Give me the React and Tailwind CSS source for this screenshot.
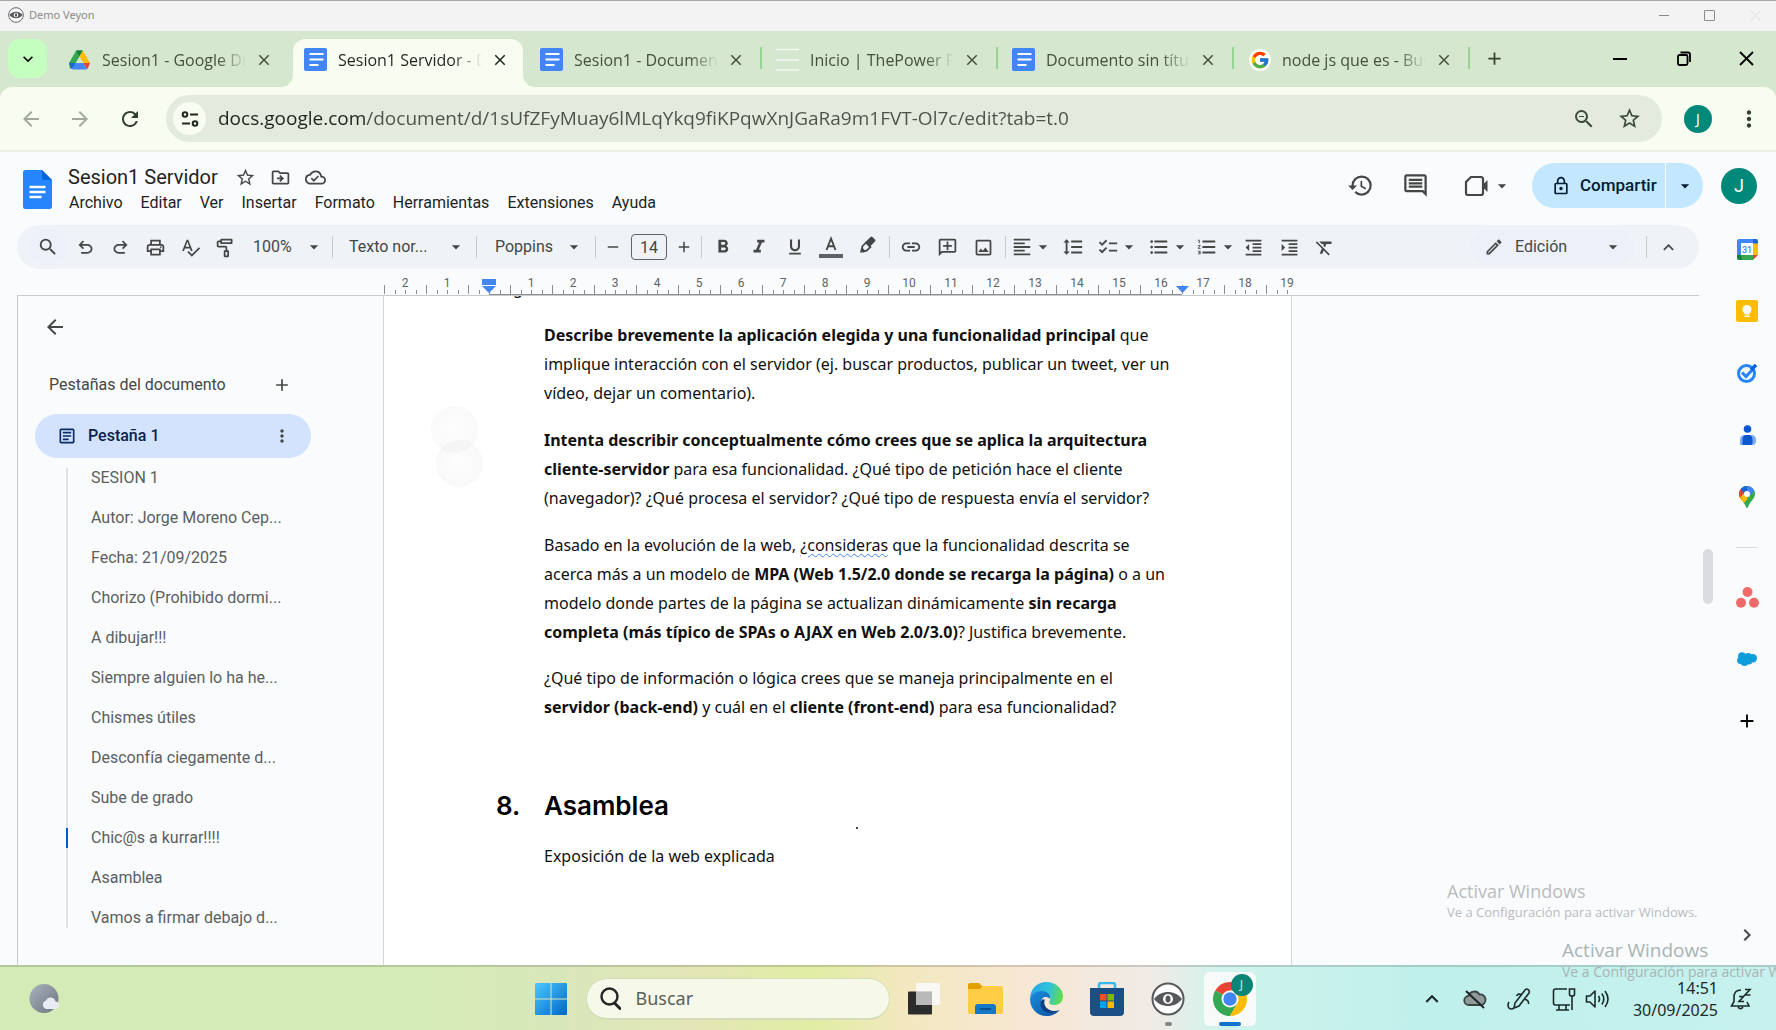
import React from "react";
import { FcGoogle } from "react-icons/fc";
import {
  MdSearch, MdOutlinePrint, MdSpellcheck, MdOutlineImagesearchRoller, MdFormatBold, MdFormatItalic,
  MdFormatUnderlined, MdLink, MdOutlineAddComment, MdOutlineImage, MdFormatAlignLeft, MdFormatLineSpacing,
  MdChecklist, MdFormatListBulleted, MdFormatListNumbered, MdFormatIndentDecrease, MdFormatIndentIncrease,
  MdFormatClear, MdOutlineEdit, MdKeyboardArrowUp, MdHistory, MdOutlineInsertComment, MdOutlineLock,
  MdStarBorder, MdOutlineDriveFileMove, MdOutlineCloudDone, MdArrowBack, MdArrowForward, MdRefresh,
  MdZoomOut, MdMoreVert, MdAdd, MdClose, MdRemove, MdKeyboardArrowDown, MdArrowDropDown, MdOutlineArticle,
  MdChevronRight,
} from "react-icons/md";

/* ---------- icons ---------- */

const DocsFavicon = () => (
  <svg width="23" height="23" viewBox="0 0 23 23" aria-hidden="true">
    <rect width="23" height="23" rx="2" fill="#4285f4" />
    <path d="M5.5 6h14M5.5 11.5h14M5.5 17h9" stroke="#fff" strokeWidth="2" />
  </svg>
);

const DriveFavicon = () => (
  <svg width="21" height="20" viewBox="0 0 21 20" aria-hidden="true">
    <path d="M7.2.6h6.6L10.5 6.4 4.4 16.9 1 19 0 13z" fill="#34a853" />
    <path d="M7.2.6h6.6l-3.3 5.8z" fill="#188038" />
    <path d="M13.8.6 21 13h-6.6L10.5 6.4z" fill="#fbbc04" />
    <path d="M21 13h-6.6l3.3 6.2c.6-.3 1-.7 1.300-1.200z" fill="#ea4335" />
    <path d="M0 13h6.700l-3.400 6.200c-.6-.3-1-.7-1.300-1.200z" fill="#1967d2" />
    <path d="M6.700 13h7.700l3.300 6.200c-.4.200-.8.300-1.200.300H4.500c-.4 0-.8-.100-1.200-.300z" fill="#4285f4" />
  </svg>
);

const LinesFavicon = () => (
  <svg width="23" height="23" viewBox="0 0 23 23" aria-hidden="true">
    <path d="M0 1.500h23M0 12h23M0 22h23" stroke="#f4f8f2" strokeWidth="1.500" />
  </svg>
);

const GoogleFavicon = () => (
  <span className="grid size-[22px] place-items-center rounded-full bg-white">
    <FcGoogle size={20} />
  </span>
);

const VeyonEye = ({ size }) => (
  <svg width={size} height={size} viewBox="0 0 34 34" aria-hidden="true">
    <circle cx="17" cy="17" r="15.500" fill="#fff" stroke="#56585c" strokeWidth="2" />
    <path d="M3 17c4-5 8.500-7 14-7s10 2 14 7c-4 5-8.500 7-14 7S7 22 3 17z" fill="#56585c" />
    <circle cx="17" cy="17" r="5" fill="#fff" />
    <ellipse cx="17" cy="17" rx="2.500" ry="3.500" fill="#56585c" />
  </svg>
);

const SiteInfo = () => (
  <svg width="20" height="20" viewBox="0 0 20 20" fill="none" stroke="#1f271f" strokeWidth="2" aria-hidden="true">
    <circle cx="5" cy="5.500" r="2.300" />
    <path d="M10 5.500h8M2 14.500h8" />
    <circle cx="15" cy="14.500" r="2.300" />
  </svg>
);

const DocsLogo = () => (
  <svg width="29" height="39" viewBox="0 0 29 39" aria-hidden="true">
    <path d="M2.500 0H19l10 10v26.500a2.500 2.500 0 0 1-2.500 2.500h-24A2.500 2.500 0 0 1 0 36.500v-34A2.500 2.500 0 0 1 2.500 0z" fill="#2684fc" />
    <path d="M19 0l10 10H21a2 2 0 0 1-2-2z" fill="#0066da" />
    <path d="M6.500 17h16M6.500 22h16M6.500 27h12" stroke="#fff" strokeWidth="2.400" />
  </svg>
);

const Undo = () => (
  <svg width="21" height="21" viewBox="0 -960 960 960" fill="currentColor" aria-hidden="true">
    <path d="M280-200v-80h284q63 0 109.500-40T720-420q0-60-46.500-100T564-560H312l104 104-56 56-200-200 200-200 56 56-104 104h252q97 0 166.500 63T800-420q0 94-69.500 157T564-200H280Z" />
  </svg>
);

const Redo = () => (
  <svg width="21" height="21" viewBox="0 -960 960 960" fill="currentColor" aria-hidden="true">
    <path d="M396-200q-97 0-166.500-63T160-420q0-94 69.500-157T396-640h252L544-744l56-56 200 200-200 200-56-56 104-104H396q-63 0-109.500 40T240-420q0 60 46.500 100T396-280h284v80H396Z" />
  </svg>
);

const TextColor = () => (
  <svg width="24" height="24" viewBox="0 0 24 24" fill="none" stroke="#444746" aria-hidden="true">
    <path d="M7.500 15 12 3.500 16.500 15M9 11.300h6" strokeWidth="1.900" />
    <path d="M0 21h24" stroke="#5f6368" strokeWidth="4" />
  </svg>
);

const Highlighter = () => (
  <svg width="20" height="20" viewBox="0 0 20 20" aria-hidden="true">
    <path d="M3 17.500h4l1.500-1.500-3.500-3.500-1 1z" fill="#444746" />
    <path d="M9 7.500 5.200 11.500v2.500l1.800 1.800h2.400l4-3.800z" fill="none" stroke="#444746" strokeWidth="1.800" />
    <path d="M8.500 7 13.500 2q1-.900 2 0l2.500 2.500q.9 1 0 2L13 11.500z" fill="#444746" />
  </svg>
);

const Meet = () => (
  <svg width="24" height="24" viewBox="0 0 24 24" fill="none" stroke="#444746" strokeWidth="2.200" aria-hidden="true">
    <path d="M7 3h10q2 0 2 2v14q0 2-2 2H4q-2 0-2-2V8z" />
    <path d="M19 10.500 23.500 6v12L19 13.500z" fill="#444746" stroke="none" />
  </svg>
);

const CalendarLogo = () => (
  <svg width="21" height="21" viewBox="0 0 21 21" aria-hidden="true">
    <path d="M2 0h14v4H4v12H0V2q0-2 2-2z" fill="#4285f4" />
    <path d="M16 0h3q2 0 2 2v3h-5z" fill="#1967d2" />
    <path d="M16 4.500h5V16h-5z" fill="#fbbc04" />
    <path d="M4 16h12v5H4z" fill="#34a853" />
    <path d="M0 16h4.500v5H2q-2 0-2-2z" fill="#188038" />
    <path d="M16 16h5l-5 5z" fill="#ea4335" />
    <path d="M4 4h12v12H4z" fill="#fff" />
    <text x="10" y="13.500" fontSize="9" fontFamily="Roboto, sans-serif" fontWeight="500" textAnchor="middle" fill="#4285f4">31</text>
  </svg>
);

const KeepLogo = () => (
  <svg width="22" height="22" viewBox="0 0 22 22" aria-hidden="true">
    <rect width="22" height="22" rx="2" fill="#fbbc04" />
    <circle cx="11" cy="9.500" r="4.500" fill="#fff" />
    <path d="M8.500 12h5v2.500h-5zM8.500 15.500h5V17h-5z" fill="#fff" />
  </svg>
);

const TasksLogo = () => (
  <svg width="22" height="20" viewBox="0 0 22 20" fill="none" aria-hidden="true">
    <circle cx="10.500" cy="10.500" r="8" stroke="#2684fc" strokeWidth="3" />
    <path d="M6 9.500l4 4 7.500-8" stroke="#2684fc" strokeWidth="3" />
    <path d="M15 7l5-5" stroke="#0066da" strokeWidth="3.500" />
  </svg>
);

const ContactsLogo = () => (
  <svg width="17" height="20" viewBox="0 0 17 20" aria-hidden="true">
    <circle cx="8.500" cy="4" r="3.800" fill="#0b57d0" />
    <path d="M1 20v-5q0-5 5-5h6q5 0 5 5v1q0 3-3 4z" fill="#7baaf7" />
    <path d="M3.500 20v-5q0-5 4-5h2q4 0 4 5v3q0 2-2 2z" fill="#0b57d0" />
  </svg>
);

const MapsLogo = () => (
  <svg width="16" height="22" viewBox="0 0 16 22" aria-hidden="true">
    <defs>
      <clipPath id="pin"><path d="M8 0a8 8 0 0 1 8 8c0 5-5 7-7 13.200q-1 1.500-2 0C5 15 0 13 0 8a8 8 0 0 1 8-8z" /></clipPath>
    </defs>
    <g clipPath="url(#pin)">
      <rect width="16" height="22" fill="#34a853" />
      <path d="M-1 14 8 4l3 6-7 8z" fill="#fbbc04" />
      <path d="M-2 14V2l4-1 7 7-7 7z" fill="#ea4335" />
      <path d="M0 13 6 6l4 5-6 6z" fill="#fbbc04" />
      <path d="M1 2 8-1l9 4-9 10 0-5z" fill="#4285f4" />
      <path d="M1 3 5 0h3l0 6-3 1z" fill="#1967d2" />
    </g>
    <circle cx="8" cy="8" r="3" fill="#fff" />
  </svg>
);

const AsanaLogo = () => (
  <svg width="23" height="21" viewBox="0 0 23 21" fill="#f06a6a" aria-hidden="true">
    <circle cx="11.500" cy="5" r="5" />
    <circle cx="5" cy="15.800" r="5" />
    <circle cx="18" cy="15.800" r="5" />
  </svg>
);

const SalesforceLogo = () => (
  <svg width="20" height="14" viewBox="0 0 20 14" fill="#0d9dda" aria-hidden="true">
    <circle cx="5" cy="4.200" r="3.900" /><circle cx="11" cy="4.500" r="3.600" /><circle cx="15.800" cy="6.300" r="4.200" />
    <circle cx="3.500" cy="8.500" r="3.400" /><circle cx="7.500" cy="10" r="3.900" /><circle cx="12" cy="9.200" r="3.200" />
  </svg>
);

const WeatherIcon = () => (
  <svg width="31" height="31" viewBox="0 0 31 31" aria-hidden="true">
    <defs>
      <linearGradient id="moon" x1="0" y1="0" x2="1" y2="1"><stop offset="0" stopColor="#aab2bd" /><stop offset="1" stopColor="#6d7480" /></linearGradient>
    </defs>
    <circle cx="15" cy="15.500" r="14.500" fill="url(#moon)" />
    <path d="M17 26a4.500 4.500 0 0 1 0-8.500 5 5 0 0 1 9.500 1A3.800 3.800 0 0 1 27 26z" fill="#e8ecf2" />
  </svg>
);

const WindowsLogo = () => (
  <svg width="32" height="32" viewBox="0 0 32 32" aria-hidden="true">
    <defs>
      <linearGradient id="win" x1="0" y1="0" x2="1" y2="1" gradientUnits="objectBoundingBox"><stop offset="0" stopColor="#4cc8ff" /><stop offset="1" stopColor="#0067c8" /></linearGradient>
    </defs>
    <path d="M0 1q0-1 1-1h14.500v15.500H0zM16.500 0H31q1 0 1 1v14.500H16.500zM0 16.500h15.500V32H1q-1 0-1-1zM16.500 16.500H32V31q0 1-1 1H16.500z" fill="url(#win)" />
  </svg>
);

const TaskViewIcon = () => (
  <svg width="32" height="32" viewBox="0 0 32 32" aria-hidden="true">
    <rect x="0" y="8.500" width="24" height="23" rx="1" fill="#2c2c2c" />
    <rect x="8" y="0" width="24" height="22" rx="1" fill="#fafafa" opacity=".9" />
    <path d="M8 8.500h16V22H8z" fill="#b9b9b9" />
  </svg>
);

const ExplorerIcon = () => (
  <svg width="35" height="32" viewBox="0 0 35 32" aria-hidden="true">
    <path d="M0 2q0-2 2-2h9l4 4-3 4H0z" fill="#e0a100" />
    <path d="M0 6h12l3-3h18q2 0 2 2v25q0 1-1 1H1q-1 0-1-1z" fill="#ffcc45" />
    <path d="M7 31v-7q0-3 3-3h15q3 0 3 3v7z" fill="#1478c8" />
    <path d="M12 26h11" stroke="#0b4f8c" strokeWidth="2" />
  </svg>
);

const EdgeIcon = () => (
  <svg width="34" height="34" viewBox="0 0 34 34" aria-hidden="true">
    <defs>
      <linearGradient id="edgeTop" x1="0" y1=".3" x2="1" y2=".5"><stop offset="0" stopColor="#2aa5e8" /><stop offset=".55" stopColor="#2fc3d8" /><stop offset="1" stopColor="#62dc4c" /></linearGradient>
      <linearGradient id="edgeBody" x1="0" y1="0" x2="1" y2="1"><stop offset="0" stopColor="#1b8fe0" /><stop offset="1" stopColor="#0c4f9e" /></linearGradient>
    </defs>
    <path d="M1 17C1 7 8 0 17.500 0 27 0 34 7 34 14.500c0 5-3.500 8.500-8.500 8.500-4 0-6-1.500-5-3.500 2.500-4.500-1-9.500-7-9.500C7 10 2.500 13 1 17z" fill="url(#edgeTop)" />
    <path d="M1 17c1.500-5 6-8 11.500-8 5.500 0 9.500 3.500 8.500 8-1-1.500-3-2-4.500-2-5 0-7 9 0 13.500 4.500 3 10.500 2 14-.5C27.500 32 22.500 34 17.500 34 8 34 1 26.500 1 17z" fill="url(#edgeBody)" />
    <path d="M13 17.500c-4 5 0 13.500 9 13.500 3.500 0 6-1 8.500-3-3.500 1.500-8 1.500-11.500-1-3.500-2.500-4.500-6-3-9.500z" fill="#0a3f86" />
  </svg>
);

const StoreIcon = () => (
  <svg width="34" height="34" viewBox="0 0 34 34" aria-hidden="true">
    <path d="M9 6V3q0-2 2-2h12q2 0 2 2v3" fill="none" stroke="#36b8ee" strokeWidth="2.500" />
    <path d="M0 6h34v24q0 4-4 4H4q-4 0-4-4z" fill="#1b4f86" />
    <path d="M10 12h6.500v6.500H10z" fill="#f25022" /><path d="M17.500 12H24v6.500h-6.500z" fill="#7fba00" />
    <path d="M10 19.500h6.500V26H10z" fill="#00a4ef" /><path d="M17.500 19.500H24V26h-6.500z" fill="#ffb900" />
  </svg>
);

const ChromeIcon = () => (
  <svg width="34" height="34" viewBox="0 0 34 34" aria-hidden="true">
    <path d="M17 17 2.300 8.500A17 17 0 0 1 31.700 8.500z" fill="#ea4335" />
    <path d="M2.300 8.500A17 17 0 0 0 17 34l7.400-12.700L17 17z" fill="#34a853" />
    <path d="M31.700 8.500H17V17l7.400 4.300L17 34A17 17 0 0 0 31.700 8.500z" fill="#fbbc04" />
    <path d="M17 8.500h14.700L24 17z" fill="#fbbc04" />
    <circle cx="17" cy="17" r="8.500" fill="#fff" />
    <circle cx="17" cy="17" r="6.700" fill="#4285f4" />
  </svg>
);

const CloudOff = () => (
  <svg width="24" height="24" viewBox="0 0 24 24" aria-hidden="true">
    <path d="M6 18a4.500 4.500 0 0 1-.5-9A6 6 0 0 1 16.500 7.500 5.300 5.300 0 0 1 18 18z" fill="#8f9a99" stroke="#3a4444" strokeWidth="1.800" />
    <path d="M3 4l18 17" stroke="#1f2727" strokeWidth="2" />
  </svg>
);

const PenIcon = () => (
  <svg width="24" height="24" viewBox="0 0 24 24" fill="none" stroke="#1c2a2a" strokeWidth="1.600" aria-hidden="true">
    <path d="M7 21l1-5L18 3q1.500-1.700 3.200-.400T22 6L12 19l-5 2z" />
    <path d="M15 8q-4-2-5.500 1M18 12.500q4 .500 3.500 4.500M2 15q-2 3 0 6 2 2 5 0" />
  </svg>
);

const NetworkIcon = () => (
  <svg width="24" height="24" viewBox="0 0 24 24" fill="none" stroke="#1c2a2a" strokeWidth="1.600" aria-hidden="true">
    <path d="M15 2H3.500Q1.500 2 1.500 4v12q0 2 2 2H18M7 18v5M14 18v5M4 23h13" />
    <path d="M17.500 2h5v5.500q0 1.500-2.500 1.500t-2.500-1.500zM20 9v14" />
  </svg>
);

const SoundIcon = () => (
  <svg width="24" height="24" viewBox="0 0 24 24" fill="none" stroke="#1c2a2a" strokeWidth="1.600" aria-hidden="true">
    <path d="M1.500 9h3.500l5-5v16l-5-5H1.500z" strokeLinejoin="round" />
    <path d="M13.500 9q2 3 0 6M16.800 6.500q4 5.500 0 11M20 4q6 8 0 16" />
  </svg>
);

const BellIcon = () => (
  <svg width="22" height="24" viewBox="0 0 22 24" fill="none" stroke="#1c2a2a" strokeWidth="1.600" aria-hidden="true">
    <path d="M11 3Q4 3 4 10v4.500L1.500 19H19l-2-4M8 20q2.500 3.500 5 0" />
    <path d="M9 9.500h4.500L9 14.500h5M15 2.500h5L15 8h5.500" />
  </svg>
);

/* ---------- window chrome ---------- */

const TABS = [
  { title: "Sesion1 - Google Drive", icon: DriveFavicon },
  { title: "Sesion1 Servidor - D", icon: DocsFavicon, active: true },
  { title: "Sesion1 - Documentos", icon: DocsFavicon, divider: true },
  { title: "Inicio | ThePower FP", icon: LinesFavicon, divider: true },
  { title: "Documento sin título", icon: DocsFavicon, divider: true },
  { title: "node js que es - Buscar", icon: GoogleFavicon, divider: true },
];

const flare =
  "before:absolute before:bottom-0 before:-left-3 before:size-3 before:bg-[radial-gradient(circle_at_0_0,transparent_12px,#f8fcf1_12px)] after:absolute after:-right-3 after:bottom-0 after:size-3 after:bg-[radial-gradient(circle_at_100%_0,transparent_12px,#f8fcf1_12px)]";

function Tab({ title, icon: Icon, active, divider }) {
  return (
    <div className="relative flex h-full w-[236px] min-w-0 px-[3px]">
      <div className={`relative flex w-full items-center rounded-t-xl pb-[7px] pl-[11px] ${active ? "bg-[#f8fcf1] text-[#1f271f] " + flare : "text-[#42523f]"}`}>
        <span className="grid w-[23px] shrink-0 place-items-center"><Icon /></span>
        <span className="ml-[11px] w-[144px] overflow-hidden font-['Open_Sans',sans-serif] text-base whitespace-nowrap mask-r-from-80% mask-r-to-100%">{title}</span>
        <button aria-label={`Cerrar ${title}`} className="ml-[9px] grid size-[18px] shrink-0 place-items-center"><MdClose size={18} /></button>
      </div>
      {divider && <span className="absolute top-2 right-0 h-[22px] w-[2px] bg-[#97d492]" />}
    </div>
  );
}

function BrowserChrome() {
  return (
    <div className="bg-[#d5e7ce]">
      <div className="flex h-[31px] items-center border-t border-[#a8a8a8] bg-[#f3f3f3] pr-[15px] pb-[2px] pl-2 text-[#8b8b8b]">
        <VeyonEye size={16} />
        <span className="ml-[5px] text-[11px]">Demo Veyon</span>
        <div className="ml-auto flex gap-[35px]">
          <button aria-label="Minimizar ventana" className="grid size-[11px] place-items-center"><span className="h-px w-[10px] bg-[#8b8b8b]" /></button>
          <button aria-label="Maximizar ventana" className="size-[11px] rounded-[1px] border border-[#8b8b8b]" />
          <button aria-label="Cerrar ventana" className="grid size-[11px] place-items-center text-[#dcdcdc]">
            <svg width="11" height="11" viewBox="0 0 11 11" stroke="currentColor"><path d="M.5.5l10 10M10.500.5l-10 10" /></svg>
          </button>
        </div>
      </div>

      <div className="flex h-14 pt-2 pl-2">
        <button aria-label="Buscar pestañas" className="grid size-[39px] place-items-center rounded-xl bg-[#c5ffbf] text-black"><MdKeyboardArrowDown size={20} /></button>
        <div className="ml-[7px] flex min-w-0">
          {TABS.map((t, i) => <Tab key={i} {...t} />)}
        </div>
        <button aria-label="Pestaña nueva" className="ml-3 grid h-[39px] w-6 place-items-center text-[#33402f]"><MdAdd size={21} /></button>
        <div className="ml-auto flex h-[39px] items-center text-black">
          <button aria-label="Minimizar" className="grid w-16 place-items-center"><span className="h-[2px] w-[14px] bg-black" /></button>
          <button aria-label="Restaurar" className="grid w-16 place-items-center">
            <svg width="14" height="15" viewBox="0 0 14 15" fill="none" stroke="#000" strokeWidth="1.800"><rect x="1" y="4" width="9.500" height="10" rx="1.500" /><path d="M3.500 1.500H11q2 0 2 2V11" /></svg>
          </button>
          <button aria-label="Cerrar" className="grid w-[60px] place-items-center">
            <svg width="15" height="15" viewBox="0 0 15 15" stroke="#000" strokeWidth="1.800"><path d="M1 1l13 13M14 1 1 14" /></svg>
          </button>
        </div>
      </div>

      <div className="flex h-[65px] items-center rounded-t-xl border-b-2 border-[#ebf0e2] bg-[#f8fcf1] pr-4 pl-[19px] text-[#33402f]">
        <button aria-label="Atrás" className="text-[#a2aa9c]"><MdArrowBack size={24} /></button>
        <button aria-label="Adelante" className="ml-[25px] text-[#a2aa9c]"><MdArrowForward size={24} /></button>
        <button aria-label="Recargar" className="ml-[26px]"><MdRefresh size={24} /></button>
        <div className="ml-6 flex h-[47px] flex-1 items-center rounded-full bg-[#e3ebdf] pr-[20px] pl-[7px]">
          <button aria-label="Información del sitio" className="grid size-[33px] place-items-center rounded-full bg-[#f8fcf1]"><SiteInfo /></button>
          <input
            aria-label="Dirección"
            defaultValue="docs.google.com/document/d/1sUfZFyMuay6lMLqYkq9fiKPqwXnJGaRa9m1FVT-Ol7c/edit?tab=t.0"
            className="ml-[12px] flex-1 bg-[linear-gradient(90deg,#1d231d_148px,#4b524a_148px)] bg-clip-text font-['Open_Sans',sans-serif] text-[19px] text-transparent outline-none"
          />
          <button aria-label="Zoom" className="text-[#3f483d]"><MdZoomOut size={24} /></button>
          <button aria-label="Añadir a marcadores" className="ml-[21px] text-[#3f483d]"><MdStarBorder size={25} /></button>
        </div>
        <button aria-label="Perfil" className="ml-[22px] grid size-7 place-items-center rounded-full bg-[#00897b] text-sm text-white">J</button>
        <button aria-label="Menú" className="ml-6 grid w-6 place-items-center"><MdMoreVert size={26} /></button>
      </div>
    </div>
  );
}

/* ---------- Docs header and toolbar ---------- */

const MENUS = ["Archivo", "Editar", "Ver", "Insertar", "Formato", "Herramientas", "Extensiones", "Ayuda"];

function DocsHeader() {
  return (
    <header className="flex h-[73px] items-start pr-[19px] pl-[23px]">
      <a href="#inicio" aria-label="Inicio de Documentos" className="mt-[18px]"><DocsLogo /></a>
      <div className="mt-[9px] ml-4">
        <div className="flex h-8 items-center text-[#444746]">
          <h1 className="text-xl text-[#1f1f1f]">Sesion1 Servidor</h1>
          <button aria-label="Destacar" className="ml-[17px]"><MdStarBorder size={21} /></button>
          <button aria-label="Mover" className="ml-[14px]"><MdOutlineDriveFileMove size={21} /></button>
          <button aria-label="Estado del documento" className="ml-[14px]"><MdOutlineCloudDone size={21} /></button>
        </div>
        <nav className="flex h-5 items-center gap-[18px] pl-px text-base text-[#1f1f1f]">
          {MENUS.map((m) => <button key={m}>{m}</button>)}
        </nav>
      </div>
      <div className="mt-[11px] ml-auto flex h-[45px] items-center text-[#444746]">
        <button aria-label="Historial"><MdHistory size={27} /></button>
        <button aria-label="Comentarios" className="ml-7"><MdOutlineInsertComment size={27} /></button>
        <button aria-label="Videollamada" className="ml-[35px] flex items-center gap-1"><Meet /><MdArrowDropDown size={20} /></button>
        <div className="ml-5 flex h-full overflow-hidden rounded-full bg-[#c2e7ff] text-[#001d35]">
          <button className="flex w-[134px] items-center gap-[9px] border-r border-white pl-[19px] text-[17px] font-medium"><MdOutlineLock size={20} />Compartir</button>
          <button aria-label="Opciones de compartir" className="grid w-[37px] place-items-center"><MdArrowDropDown size={20} /></button>
        </div>
        <button aria-label="Cuenta" className="ml-[18px] grid size-9 place-items-center rounded-full bg-[#00897b] text-lg text-white">J</button>
      </div>
    </header>
  );
}

const Tool = ({ label, className = "w-9", children }) => (
  <button aria-label={label} className={`flex h-9 shrink-0 items-center justify-center ${className}`}>{children}</button>
);

const Sep = ({ className = "mx-[6px]" }) => <span className={`h-[22px] w-px shrink-0 bg-[#c7cacd] ${className}`} />;

const Picker = ({ label, value, className }) => (
  <label className={`flex shrink-0 items-center ${className}`}>
    <select aria-label={label} className="min-w-0 flex-1 appearance-none bg-transparent text-base outline-none">
      <option>{value}</option>
    </select>
    <MdArrowDropDown size={20} className="shrink-0" />
  </label>
);

function Toolbar() {
  return (
    <div role="toolbar" className="flex h-[44px] items-center rounded-full bg-[#eff3f8] pr-[19px] pl-[11px] text-[#444746]">
      <Tool label="Buscar en los menús" className="w-[40px] rounded-full bg-[#ecf0f9]"><MdSearch size={22} /></Tool>
      <Tool label="Deshacer" className="w-[35px]"><Undo /></Tool>
      <Tool label="Rehacer" className="w-[35px]"><Redo /></Tool>
      <Tool label="Imprimir" className="w-[35px]"><MdOutlinePrint size={21} /></Tool>
      <Tool label="Ortografía" className="w-[35px]"><MdSpellcheck size={21} /></Tool>
      <Tool label="Copiar formato" className="w-[35px]"><MdOutlineImagesearchRoller size={21} /></Tool>
      <Picker label="Zoom" value="100%" className="w-[81px] pl-[10px]" />
      <Sep className="mr-[6px] ml-[8px]" />
      <Picker label="Estilo" value="Texto nor..." className="w-[127px] pl-[10px]" />
      <Sep className="mr-[6px] ml-[10px]" />
      <Picker label="Fuente" value="Poppins" className="w-[101px] pl-[12px]" />
      <Sep className="mr-[6px] ml-[11px]" />
      <Tool label="Reducir fuente" className="w-[22px]"><MdRemove size={18} /></Tool>
      <input aria-label="Tamaño de fuente" defaultValue="14" className="mx-[7px] h-[26px] w-9 shrink-0 rounded-[4px] border border-[#5f6368] bg-transparent text-center text-base outline-none" />
      <Tool label="Aumentar fuente" className="w-5"><MdAdd size={18} className="shrink-0" /></Tool>
      <Sep className="mr-[3px] ml-[7px]" />
      <Tool label="Negrita"><MdFormatBold size={22} /></Tool>
      <Tool label="Cursiva"><MdFormatItalic size={22} /></Tool>
      <Tool label="Subrayado"><MdFormatUnderlined size={20} /></Tool>
      <Tool label="Color de texto"><TextColor /></Tool>
      <Tool label="Resaltar" className="w-9 pb-1"><Highlighter /></Tool>
      <Sep className="mr-[3px] ml-1" />
      <Tool label="Insertar enlace"><MdLink size={22} /></Tool>
      <Tool label="Añadir comentario"><MdOutlineAddComment size={21} className="-scale-x-100" /></Tool>
      <Tool label="Insertar imagen"><MdOutlineImage size={21} /></Tool>
      <Sep className="mr-[3px] ml-1" />
      <Tool label="Alinear" className="w-[46px]"><MdFormatAlignLeft size={22} /><MdArrowDropDown size={20} /></Tool>
      <Tool label="Interlineado"><MdFormatLineSpacing size={22} /></Tool>
      <Tool label="Lista de comprobación" className="w-[54px]"><MdChecklist size={22} /><MdArrowDropDown size={20} /></Tool>
      <Tool label="Viñetas" className="w-12"><MdFormatListBulleted size={22} /><MdArrowDropDown size={20} /></Tool>
      <Tool label="Lista numerada" className="w-12"><MdFormatListNumbered size={22} /><MdArrowDropDown size={20} /></Tool>
      <Tool label="Reducir sangría" className="mr-[6px] w-6"><MdFormatIndentDecrease size={21} /></Tool>
      <Tool label="Aumentar sangría"><MdFormatIndentIncrease size={21} /></Tool>
      <Tool label="Borrar formato" className="w-[34px]"><MdFormatClear size={21} /></Tool>
      <div className="ml-auto flex h-[34px] items-center rounded-full bg-[#ecf0f9] pr-3 pl-[14px]">
        <MdOutlineEdit size={20} />
        <Picker label="Modo" value="Edición" className="ml-[11px] w-[108px]" />
      </div>
      <Sep className="mr-[9px] ml-[11px]" />
      <Tool label="Ocultar menús" className="w-6"><MdKeyboardArrowUp size={21} /></Tool>
    </div>
  );
}

const CM = 42;
const ZERO = 106;
const NUMBERS = [-2, -1, ...Array.from({ length: 19 }, (_, i) => i + 1)];

function Ruler() {
  return (
    <svg className="ml-[366px] block h-[26px] w-[920px]" aria-hidden="true">
      {Array.from({ length: 87 }, (_, k) => (
        <rect key={k} x={Math.round(ZERO - CM * 2.5 + (k * CM) / 4)} y={k % 4 === 0 ? 16 : 21} width="1" height={k % 4 === 0 ? 9 : 4} fill="#8b8f94" />
      ))}
      {NUMBERS.map((n) => (
        <text key={n} x={ZERO + n * CM} y="18" textAnchor="middle" fontSize="12" fill="#5f6368" fontFamily="Roboto, sans-serif">{Math.abs(n)}</text>
      ))}
      <rect x={ZERO} y="25" width={CM * 16.5} height="1" fill="#8b8f94" />
      <path d={`M${ZERO - 7} 10h14v6h-14zM${ZERO - 7} 17h14l-7 7z`} fill="#4285f4" />
      <path d={`M${ZERO + CM * 16.5 - 6} 17h13l-6.500 7z`} fill="#4285f4" />
    </svg>
  );
}

/* ---------- outline and page ---------- */

const OUTLINE = [
  "SESION 1", "Autor: Jorge Moreno Cep...", "Fecha: 21/09/2025", "Chorizo (Prohibido dormi...", "A dibujar!!!",
  "Siempre alguien lo ha he...", "Chismes útiles", "Desconfía ciegamente d...", "Sube de grado", "Chic@s a kurrar!!!!",
  "Asamblea", "Vamos a firmar debajo d...",
];

function Outline() {
  return (
    <aside className="w-[365px] shrink-0 pt-[19px] text-base text-[#444746]">
      <button aria-label="Cerrar esquema" className="ml-[25px] block"><MdArrowBack size={24} /></button>
      <div className="mt-[35px] flex h-[22px] w-[293px] items-center justify-between pr-[19px] pl-[31px]">
        <h2>Pestañas del documento</h2>
        <button aria-label="Añadir pestaña"><MdAdd size={20} /></button>
      </div>
      <div className="mt-[18px] ml-[17px] flex h-[44px] w-[276px] items-center rounded-full bg-[#d3e3fd] pr-[19px] pl-[22px]">
        <MdOutlineArticle size={20} className="text-[#0b2a66]" />
        <button className="ml-[11px] font-medium text-[#0b1f4b]">Pestaña 1</button>
        <button aria-label="Opciones de pestaña" className="ml-auto"><MdMoreVert size={20} /></button>
      </div>
      <ul className="mt-[10px] ml-[48px] w-[240px] border-l-2 border-[#e0e3e7]">
        {OUTLINE.map((item, i) => (
          <li key={item} className={`flex items-center text-[#5c5f61] ${i < 11 ? "mb-5" : ""} ${i === 9 ? "-ml-[2px] border-l-2 border-[#0b57d0] pl-[23px] text-[#0b57d0]" : "pl-[23px]"}`}>
            <a href={`#seccion-${i + 1}`} className="h-5 leading-5 text-inherit">{item}</a>
          </li>
        ))}
      </ul>
    </aside>
  );
}

function Page() {
  return (
    <article className="relative w-[909px] shrink-0 overflow-hidden border-x border-[#d3d6da] bg-white pl-[160px] font-['Noto_Sans',sans-serif] text-base leading-[29px] whitespace-nowrap text-[#111]">
      <div aria-hidden="true" className="absolute top-[110px] left-[47px] size-[47px] rounded-full bg-[radial-gradient(circle,#fdfdfd,#f8f8f8)]" />
      <div aria-hidden="true" className="absolute top-[144px] left-[52px] size-[47px] rounded-full bg-[radial-gradient(circle,#00000002,#00000008)]" />
      <p className="-mt-[22px] mb-[18px] -ml-[31px] flex"><span>g</span><span className="ml-[264px]">,</span></p>
      <p className="mb-[18px]">
        <b>Describe brevemente la aplicación elegida y una funcionalidad principal</b> que<br />
        implique interacción con el servidor (ej. buscar productos, publicar un tweet, ver un<br />
        vídeo, dejar un comentario).
      </p>
      <p className="mb-[18px]">
        <b>Intenta describir conceptualmente cómo crees que se aplica la arquitectura</b><br />
        <b>cliente-servidor</b> para esa funcionalidad. ¿Qué tipo de petición hace el cliente<br />
        (navegador)? ¿Qué procesa el servidor? ¿Qué tipo de respuesta envía el servidor?
      </p>
      <p className="mb-[17px]">
        Basado en la evolución de la web, <span className="underline decoration-[#4285f4] decoration-wavy decoration-1 underline-offset-2">¿consideras</span> que la funcionalidad descrita se<br />
        acerca más a un modelo de <b>MPA (Web 1.5/2.0 donde se recarga la página)</b> o a un<br />
        modelo donde partes de la página se actualizan dinámicamente <b>sin recarga</b><br />
        <b>completa (más típico de SPAs o AJAX en Web 2.0/3.0)</b>? Justifica brevemente.
      </p>
      <p>
        ¿Qué tipo de información o lógica crees que se maneja principalmente en el<br />
        <b>servidor (back-end)</b> y cuál en el <b>cliente (front-end)</b> para esa funcionalidad?
      </p>
      <h2 className="mt-[69px] -ml-12 flex font-['Inter',sans-serif] text-[26px] font-semibold text-black"><span className="w-12">8.</span>Asamblea</h2>
      <span aria-hidden="true" className="mt-[7px] ml-[312px] block size-[2px] bg-[#444]" />
      <p className="mt-[13px]">Exposición de la web explicada</p>
    </article>
  );
}

const ADDONS = [
  ["Calendar", CalendarLogo], ["Keep", KeepLogo], ["Tasks", TasksLogo], ["Contactos", ContactsLogo], ["Maps", MapsLogo],
];

function SidePanel() {
  return (
    <aside className="flex w-[58px] shrink-0 flex-col items-center pt-[2px] pb-[18px]">
      {ADDONS.map(([name, Logo]) => (
        <button key={name} aria-label={name} className="mb-[18px] grid h-11 w-11 place-items-center"><Logo /></button>
      ))}
      <hr className="mt-[10px] w-[22px] border-[#dadce0]" />
      <button aria-label="Asana" className="mt-[27px] grid size-11 place-items-center"><AsanaLogo /></button>
      <button aria-label="Salesforce" className="mt-[18px] grid size-11 place-items-center"><SalesforceLogo /></button>
      <button aria-label="Obtener complementos" className="mt-[18px] grid size-11 place-items-center text-black"><MdAdd size={22} /></button>
      <button aria-label="Ocultar panel lateral" className="mt-auto text-[#444746]"><MdChevronRight size={24} /></button>
    </aside>
  );
}

/* ---------- Windows taskbar ---------- */

const APPS = [
  ["Vista de tareas", <TaskViewIcon />], ["Explorador de archivos", <ExplorerIcon />], ["Edge", <EdgeIcon />], ["Microsoft Store", <StoreIcon />],
];

function Taskbar() {
  return (
    <footer className="grid h-[65px] shrink-0 grid-cols-[1fr_auto_1fr] items-center border-t-2 border-[#00000026] bg-[linear-gradient(90deg,#d3ebb4_0%,#d5ebb6_24%,#d9e7ba_32%,#e3e6b6_39%,#e1eda4_46%,#f3e8c0_51%,#f7e7d4_58%,#efebe6_65%,#cff3ec_69%,#c0f0ec_80%,#c6f1ee_100%)] bg-origin-border">
      <button aria-label="El tiempo" className="ml-[29px] w-fit"><WeatherIcon /></button>
      <div className="flex items-center">
        <button aria-label="Inicio" className="grid w-[61px] place-items-center"><WindowsLogo /></button>
        <label className="mr-1 ml-1 flex h-[42px] w-[304px] items-center rounded-full border border-b-2 border-[#d5ddb8] bg-[#f6f9e9] pl-[13px]">
          <svg width="21" height="23" viewBox="0 0 21 23" fill="none" stroke="#252525" strokeWidth="2.400"><circle cx="9.500" cy="9.500" r="8" /><path d="M14.500 16 20 21.500" strokeWidth="3" strokeLinecap="round" /></svg>
          <input aria-label="Buscar" placeholder="Buscar" className="ml-[15px] w-48 bg-transparent text-lg outline-none placeholder:text-[#5b6057]" />
        </label>
        {APPS.map(([name, icon]) => <button key={name} aria-label={name} className="grid w-[61px] place-items-center">{icon}</button>)}
        <button aria-label="Veyon" className="relative grid h-[54px] w-[61px] place-items-center"><VeyonEye size={34} /><span className="absolute bottom-0 h-1 w-[7px] rounded-full bg-[#84878a]" /></button>
        <button aria-label="Chrome" className="relative ml-[5px] grid h-[54px] w-[52px] place-items-center rounded-md bg-[#f7faf8]">
          <ChromeIcon />
          <span className="absolute top-[2px] right-[3px] grid size-[22px] place-items-center rounded-full bg-[#0c8476] text-xs text-[#cfe9e5]">J</span>
          <span className="absolute bottom-0 h-1 w-[22px] rounded-full bg-[#0f73cc]" />
        </button>
      </div>
      <div className="flex items-center justify-end pr-6 text-[#1c2a2a]">
        <button aria-label="Mostrar iconos ocultos" className="grid w-6 place-items-center"><MdKeyboardArrowUp size={26} /></button>
        <button aria-label="OneDrive" className="ml-5"><CloudOff /></button>
        <button aria-label="Lápiz" className="ml-5"><PenIcon /></button>
        <button aria-label="Red" className="ml-[21px]"><NetworkIcon /></button>
        <button aria-label="Sonido" className="ml-[9px]"><SoundIcon /></button>
        <button className="ml-6 text-right text-base leading-[22px]">14:51<br />30/09/2025</button>
        <button aria-label="Notificaciones" className="ml-3"><BellIcon /></button>
      </div>
    </footer>
  );
}

export default function App() {
  return (
    <div className="relative flex h-screen flex-col overflow-hidden bg-[#f9fbfd] font-['Noto_Sans',sans-serif]">
      <BrowserChrome />
      <div className="flex min-h-0 flex-1 flex-col font-['Roboto',sans-serif]">
        <DocsHeader />
        <div className="flex min-h-0 flex-1">
          <main className="relative flex min-w-0 flex-1 flex-col pr-[19px] pl-[17px]">
            <Toolbar />
            <Ruler />
            <div className="flex min-h-0 flex-1 overflow-hidden border-t border-l border-[#c7cacd]">
              <Outline />
              <Page />
            </div>
            <div aria-hidden="true" className="absolute top-[324px] right-[5px] h-[55px] w-[10px] rounded-full bg-[#dadce0]" />
          </main>
          <SidePanel />
        </div>
      </div>
      <Taskbar />
      <div className="pointer-events-none absolute right-[72px] bottom-[109px] w-[257px] font-['Open_Sans',sans-serif] whitespace-nowrap text-[#b9bbbd]">
        <p className="text-lg leading-6">Activar Windows</p>
        <p className="text-[13px] leading-[18px]">Ve a Configuración para activar Windows.</p>
      </div>
      <div className="pointer-events-none absolute -right-[60px] bottom-[48px] w-[274px] font-['Open_Sans',sans-serif] whitespace-nowrap text-[#a9b4b5]">
        <p className="text-[19px] leading-6">Activar Windows</p>
        <p className="text-sm leading-5">Ve a Configuración para activar Windows.</p>
      </div>
    </div>
  );
}
